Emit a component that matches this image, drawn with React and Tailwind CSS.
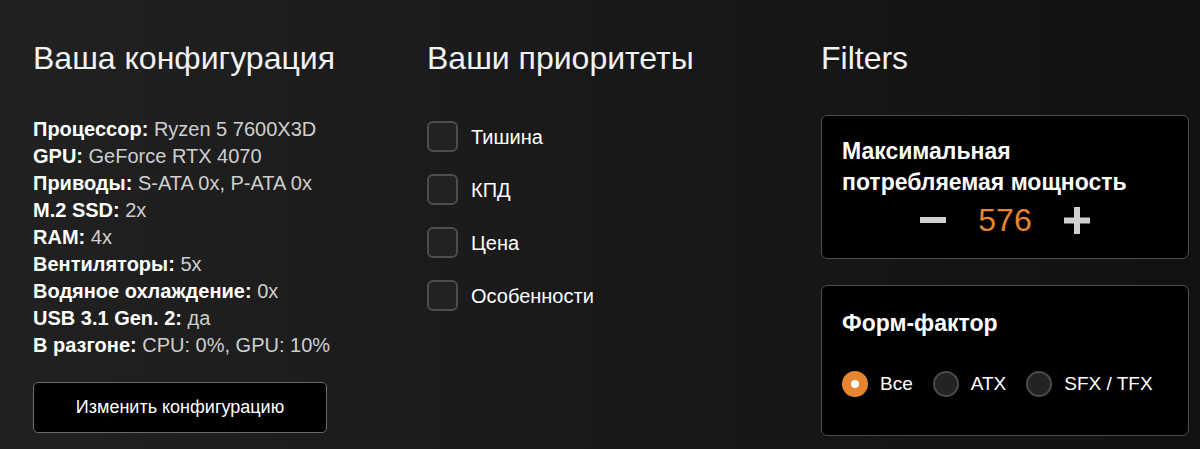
import React from "react";

const specs = [
    ["Процессор:", "Ryzen 5 7600X3D"],
    ["GPU:", "GeForce RTX 4070"],
    ["Приводы:", "S-ATA 0x, P-ATA 0x"],
    ["M.2 SSD:", "2x"],
    ["RAM:", "4x"],
    ["Вентиляторы:", "5x"],
    ["Водяное охлаждение:", "0x"],
    ["USB 3.1 Gen. 2:", "да"],
    ["В разгоне:", "CPU: 0%, GPU: 10%"],
];

const priorities = ["Тишина", "КПД", "Цена", "Особенности"];

const forms = [
    { label: "Все", checked: true },
    { label: "ATX", checked: false },
    { label: "SFX / TFX", checked: false },
];

const Radio = ({ label, checked }) => (
    <label className="flex items-center gap-3 shrink-0 whitespace-nowrap">
        {checked ? (
            <span className="shrink-0 w-[26px] h-[26px] rounded-full bg-[#e5852f] flex items-center justify-center">
                <span className="w-[8px] h-[8px] rounded-full bg-white"></span>
            </span>
        ) : (
            <span className="shrink-0 w-[26px] h-[26px] rounded-full bg-[#232323] border-2 border-[#4a4a4a]"></span>
        )}
        <span className="text-[19px] leading-[26px] text-white">{label}</span>
    </label>
);

const App = () => {
    return (
        <div className="w-full h-[449px] overflow-hidden bg-linear-to-r from-[#212121] to-[#111111] text-white px-[33px] pt-[40px] font-['Liberation_Sans',Arial,sans-serif]">
            <div className="grid grid-cols-[394px_394px_368px]">
                {/* конфигурация */}
                <div>
                    <h2 className="text-[32px] leading-[36px] font-light text-[#f2f2f2]">Ваша конфигурация</h2>
                    <ul className="mt-[40px] text-[20px] leading-[27px]">
                        {specs.map(([k, v]) => (
                            <li key={k}>
                                <span className="font-bold text-white">{k}</span>{" "}
                                <span className="text-[#cfcfcf]">{v}</span>
                            </li>
                        ))}
                    </ul>
                    <button className="mt-[23px] w-[294px] h-[51px] bg-black border border-[#6b6b6b] rounded-[5px] text-[18px] text-white">
                        Изменить конфигурацию
                    </button>
                </div>

                {/* приоритеты */}
                <div>
                    <h2 className="text-[32px] leading-[36px] font-light text-[#f2f2f2]">Ваши приоритеты</h2>
                    <div className="mt-[45px] flex flex-col gap-[22px]">
                        {priorities.map((p) => (
                            <label key={p} className="flex items-center gap-[13px]">
                                <span className="w-[31px] h-[31px] rounded-[6px] bg-[#222222] border-2 border-[#4d4d4d]"></span>
                                <span className="text-[20px] text-white">{p}</span>
                            </label>
                        ))}
                    </div>
                </div>

                {/* filters */}
                <div>
                    <h2 className="text-[32px] leading-[36px] font-light text-[#f2f2f2]">Filters</h2>
                    <div className="mt-[39px] bg-black border border-[#4f4f4f] rounded-[6px] px-[20px] pt-[20px] pb-[20px]">
                        <h3 className="text-[23px] leading-[31px] font-bold text-white">
                            Максимальная
                            <br />
                            потребляемая мощность
                        </h3>
                        <div className="mt-[4px] h-[36px] flex items-center justify-center gap-8">
                            <span className="w-[26px] h-[6px] bg-[#d0d0d0]"></span>
                            <span className="text-[32px] leading-[36px] text-[#e5852f]">576</span>
                            <svg width="26" height="27" viewBox="0 0 26 27">
                                <rect x="0" y="10.5" width="26" height="6" fill="#d0d0d0" />
                                <rect x="10" y="0" width="6" height="27" fill="#d0d0d0" />
                            </svg>
                        </div>
                    </div>
                    <div className="mt-[26px] bg-black border border-[#4f4f4f] rounded-[6px] px-[20px] pt-[22px] pb-[38px]">
                        <h3 className="text-[23px] leading-[31px] font-bold text-white">Форм-фактор</h3>
                        <div className="mt-[32px] flex items-center gap-5">
                            {forms.map((f) => (
                                <Radio key={f.label} label={f.label} checked={f.checked} />
                            ))}
                        </div>
                    </div>
                </div>
            </div>
        </div>
    );
};

export default App;
